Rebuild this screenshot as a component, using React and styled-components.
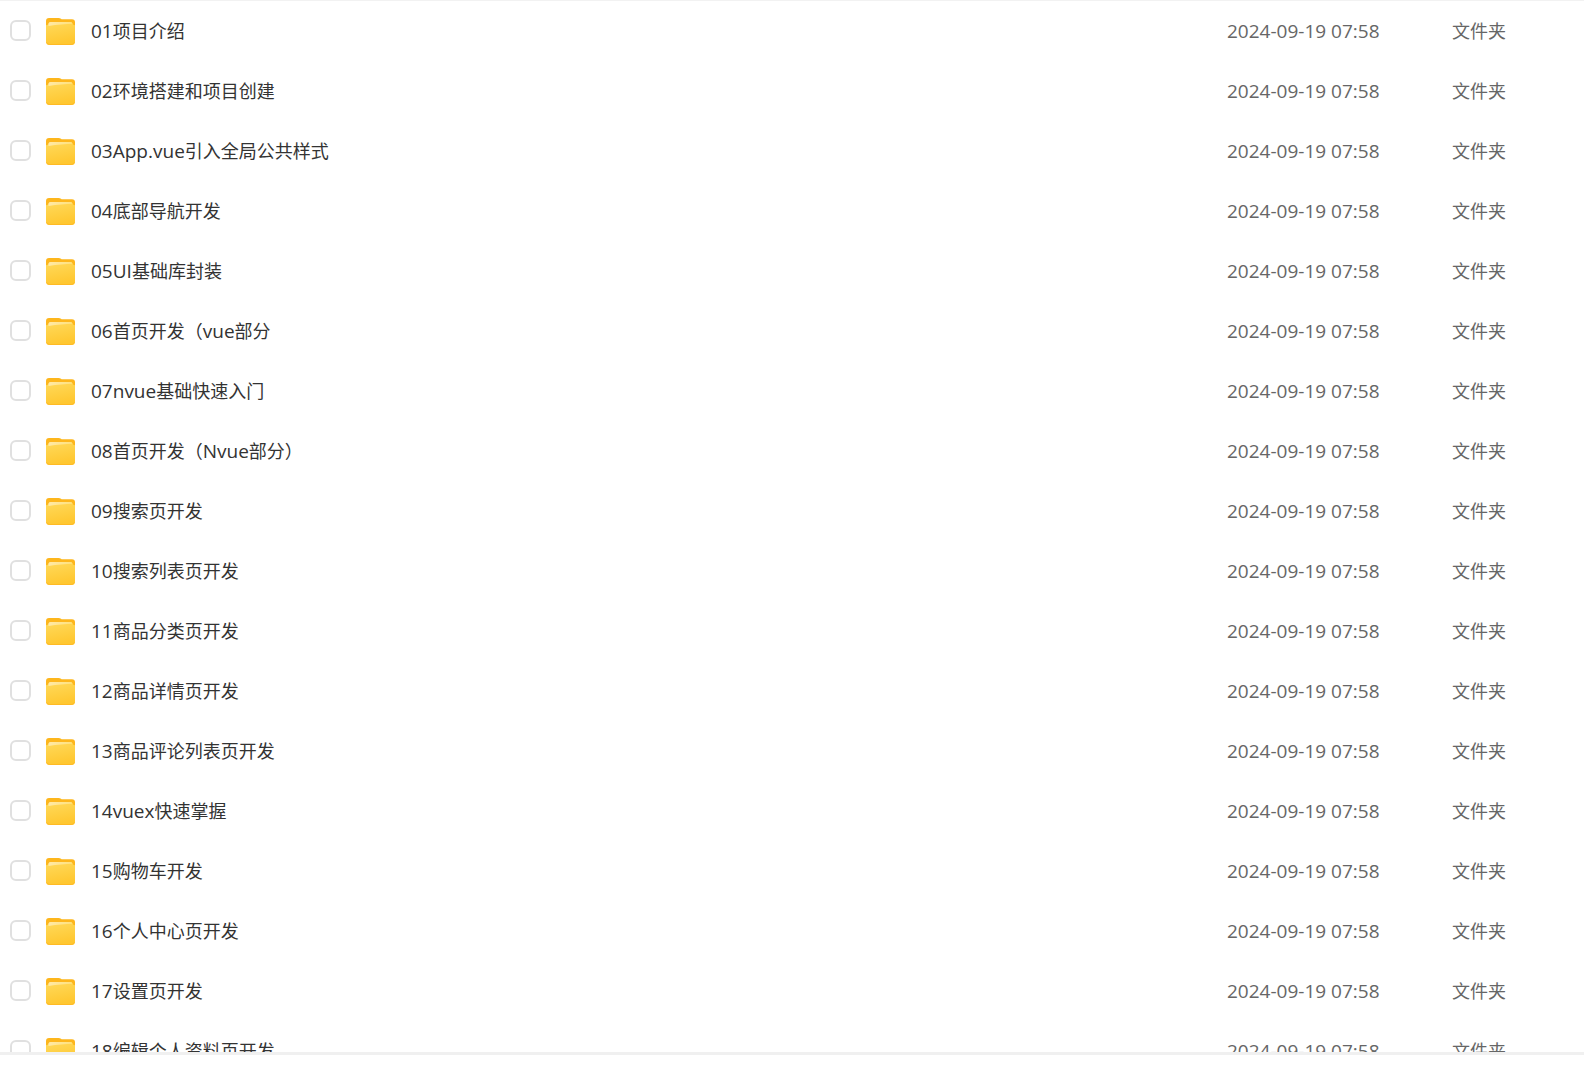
import React from "react";
import styled, { createGlobalStyle } from "styled-components";

const GlobalStyle = createGlobalStyle`
  * { box-sizing: border-box; }
  body {
    margin: 0;
    background: #fff;
    font-family: "Open Sans", "Noto Sans CJK SC", sans-serif;
    font-size: 18px;
    line-height: 24px;
    color: #333;
  }
`;

const Page = styled.main`
  display: flex;
  flex-direction: column;
  height: 100vh;
`;

const ListViewport = styled.section`
  flex: 1;
  min-height: 0;
  overflow: hidden;
  border-top: 1px solid #f2f2f2;
  border-bottom: 3px solid #f0f0f0;
`;

const Footer = styled.footer`
  flex: none;
  height: 31px;
`;

const FileTable = styled.table`
  width: 100%;
  table-layout: fixed;
  border-collapse: collapse;
`;

const Row = styled.tr`
  height: 60px;
`;

const Cell = styled.td`
  width: ${(p) => p.$width || "auto"};
  padding: 0;
  color: ${(p) => (p.$muted ? "#666" : "#333")};
  vertical-align: middle;
  white-space: nowrap;
`;

const NameLabel = styled.label`
  display: flex;
  align-items: center;
  padding-left: 10px;
`;

const Checkbox = styled.input`
  appearance: none;
  flex: none;
  width: 21px;
  height: 21px;
  margin: 0 15px 2px 0;
  border: 2px solid #e0e0e0;
  border-radius: 6px;
  background: #fff;

  &:checked {
    border-color: #ffc42e;
    background: #ffc42e;
  }
`;

const FolderSvg = styled.svg`
  flex: none;
  width: 29px;
  height: 28px;
  margin-right: 16px;
`;

const Latin = styled.span`
  font-size: 19px;
`;

function FolderIcon() {
  return (
    <FolderSvg viewBox="0 0 29 28" aria-hidden="true">
      <path d="M0 4Q0 1 3 1H12.5Q14 1 15 1.8L15.6 2.2H26Q29 2.2 29 5.2V12H0Z" fill="#fdb61c" />
      <path d="M0 8.2Q2.3 8 2.5 6.4Q2.8 5 4.5 5H24.5Q26.2 5 26.5 6.4Q26.8 8 29 8.2V24.5Q29 28 25.5 28H3.5Q0 28 0 24.5Z" fill="url(#folderFront)" />
      <path d="M2.5 6.8Q2.8 5 4.5 5H24.5Q26.2 5 26.5 6.8Q16 7 2.5 9Z" fill="url(#folderShine)" />
      <path d="M.5 25.2Q1.2 27.5 3.6 27.5H25.4Q27.8 27.5 28.5 25.2" fill="none" stroke="#ffba24" />
    </FolderSvg>
  );
}

const names = [
  "01项目介绍",
  "02环境搭建和项目创建",
  "03App.vue引入全局公共样式",
  "04底部导航开发",
  "05UI基础库封装",
  "06首页开发（vue部分",
  "07nvue基础快速入门",
  "08首页开发（Nvue部分）",
  "09搜索页开发",
  "10搜索列表页开发",
  "11商品分类页开发",
  "12商品详情页开发",
  "13商品评论列表页开发",
  "14vuex快速掌握",
  "15购物车开发",
  "16个人中心页开发",
  "17设置页开发",
  "18编辑个人资料页开发",
];

function MixedText({ children }) {
  return children
    .split(/([\x20-\x7e]+)/)
    .filter(Boolean)
    .map((run, i) => (/^[\x20-\x7e]/.test(run) ? <Latin key={i}>{run}</Latin> : run));
}

const Gradients = styled.svg`
  display: block;
`;

export default function App() {
  return (
    <>
      <GlobalStyle />
      <Gradients width="0" height="0" aria-hidden="true">
        <defs>
          <linearGradient id="folderFront" x1="0" y1="0" x2="0.25" y2="1">
            <stop offset="0" stopColor="#ffda5c" />
            <stop offset="1" stopColor="#ffc730" />
          </linearGradient>
          <linearGradient id="folderShine" x1="0" y1="0" x2="1" y2="0">
            <stop offset="0" stopColor="#ffe9a6" />
            <stop offset="1" stopColor="#ffe17c" />
          </linearGradient>
        </defs>
      </Gradients>
      <Page>
        <ListViewport>
          <FileTable>
            <tbody>
              {names.map((name) => (
                <Row key={name}>
                  <Cell>
                    <NameLabel>
                      <Checkbox type="checkbox" />
                      <FolderIcon />
                      <span>
                        <MixedText>{name}</MixedText>
                      </span>
                    </NameLabel>
                  </Cell>
                  <Cell $width="225px" $muted>
                    <Latin as="time">2024-09-19 07:58</Latin>
                  </Cell>
                  <Cell $width="132px" $muted>文件夹</Cell>
                </Row>
              ))}
            </tbody>
          </FileTable>
        </ListViewport>
        <Footer />
      </Page>
    </>
  );
}
